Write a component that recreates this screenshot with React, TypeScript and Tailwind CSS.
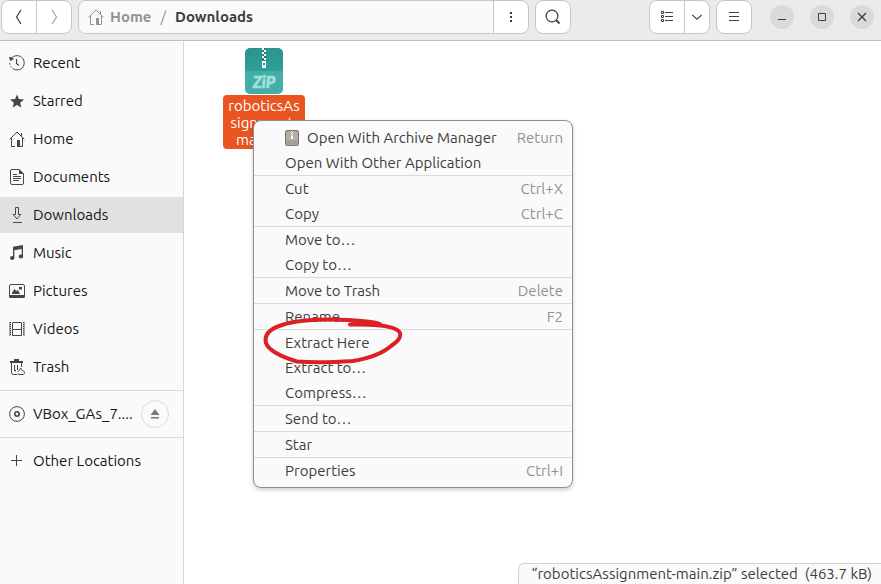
import React from "react";

const stroke = { fill: "none", stroke: "currentColor", strokeWidth: 1 } as const;

function Icon({ children, size = 16 }: { children: React.ReactNode; size?: number }) {
  return (
    <svg width={size} height={size} viewBox="0 0 16 16" className="shrink-0" aria-hidden="true">
      {children}
    </svg>
  );
}

const HomeIcon = () => (
  <Icon>
    <path {...stroke} d="M.6 8.4 8 1l7.4 7.4M2.5 7v8.5H6M13.5 7v8.5H10M12.5 2v3.5" />
    <path fill="currentColor" d="M8 9h3v7H8z" />
  </Icon>
);
const RecentIcon = () => (
  <Icon>
    <path {...stroke} d="M2.2 3.6A7.2 7.2 0 1 1 .8 8" strokeDasharray="34 1.5 1.5 1.5" />
    <path fill="currentColor" d="M0 2h2l3 2.2L1.2 6z" />
    <path {...stroke} strokeWidth={1.2} d="M7.5 4v4.5l2.5 2" />
  </Icon>
);
const StarIcon = () => (
  <Icon>
    <path fill="currentColor" d="m8 1.5 1.9 4.4 5.1.5-3.8 3.3 1.1 4.9L8 12l-4.3 2.6 1.1-4.9L1 6.4l5.1-.5z" />
  </Icon>
);
const DocumentsIcon = () => (
  <Icon>
    <path {...stroke} d="M3 .5h7L14.500 5v9a1.500 1.500 0 0 1-1.500 1.500H3A1.500 1.500 0 0 1 1.500 14V2A1.500 1.500 0 0 1 3 .5z" />
    <path fill="currentColor" d="M10 0v5h5z" />
    <path {...stroke} d="M4 5.500h4M4 7.500h8M4 9.500h8M4 11.500h6" />
  </Icon>
);
const DownloadsIcon = () => (
  <Icon>
    <path {...stroke} d="M6.500.5h3v7h2.300L8 12 4.200 7.500h2.300zM4 15.500h9" />
  </Icon>
);
const MusicIcon = () => (
  <Icon>
    <path fill="currentColor" d="M4 1.800 14 0v11h-1.300V4L5.300 5.300V13H4z" />
    <ellipse cx="3.200" cy="13" rx="2.200" ry="1.900" fill="currentColor" />
    <ellipse cx="11.900" cy="11.500" rx="2.200" ry="1.900" fill="currentColor" />
  </Icon>
);
const PicturesIcon = () => (
  <Icon>
    <rect {...stroke} x=".5" y="1.500" width="15" height="12" rx="1.500" />
    <path fill="currentColor" d="M0 12h16v1.500a1.500 1.500 0 0 1-1.500 1.500h-13A1.500 1.500 0 0 1 0 13.500zM3 11V9.500L5.500 6l2 2 1.500-1 2 4zM10 4h3v2.500h-3z" />
  </Icon>
);
const VideosIcon = () => (
  <Icon>
    <path {...stroke} d="M3.500 1.500h9v13h-9zM3.500 8.500h9" />
    <path {...stroke} strokeDasharray="1 1" d="M1.500 1v14M14.500 1v14" />
    <path {...stroke} strokeWidth={0.800} d="M.9 1v14M15.100 1v14" />
  </Icon>
);
const TrashIcon = () => (
  <Icon>
    <path fill="currentColor" d="M1 2h4V0h5v2h4v2H1z" />
    <path {...stroke} d="M2.500 4v9.500a2 2 0 0 0 2 2H8M12.500 4v4M5.500 6v6M8.500 6v5" />
    <path {...stroke} d="M9 13c0-1 1-1.500 2-2-.3-1 .2-1.500.8-2 .2 1.200 1.200 1.500 1.200 2.500 1.500.3 2.500 1 2.500 2.200 0 1-.6 1.800-1.500 1.800h-4c-.8 0-1.200-.8-1.200-1.500M6.500 11v1.500" />
  </Icon>
);
const DiscIcon = () => (
  <Icon>
    <circle {...stroke} cx="8" cy="8" r="7.400" />
    <circle {...stroke} strokeWidth={1.600} cx="8" cy="8" r="2.200" />
  </Icon>
);
const PlusIcon = () => (
  <Icon>
    <path {...stroke} d="M2 7.500h11M7.500 2v11" />
  </Icon>
);

const places = [
  { name: "Recent", icon: <RecentIcon /> },
  { name: "Starred", icon: <StarIcon /> },
  { name: "Home", icon: <HomeIcon /> },
  { name: "Documents", icon: <DocumentsIcon /> },
  { name: "Downloads", icon: <DownloadsIcon />, active: true },
  { name: "Music", icon: <MusicIcon /> },
  { name: "Pictures", icon: <PicturesIcon /> },
  { name: "Videos", icon: <VideosIcon /> },
  { name: "Trash", icon: <TrashIcon /> },
];

function Place({ name, icon, active }: { name: string; icon: React.ReactNode; active?: boolean }) {
  return (
    <button
      type="button"
      className={`flex h-9 w-full items-center gap-2 pl-[9px] text-left ${active ? "bg-[#e1e1e1]" : ""}`}
    >
      <span className="text-[#464646]">{icon}</span>
      <span className="whitespace-nowrap text-[#161616]">{name}</span>
    </button>
  );
}

function ArchiveIcon() {
  return (
    <svg width="14" height="16" viewBox="0 0 14 16" className="shrink-0" aria-hidden="true">
      <rect x=".5" y=".5" width="13" height="15" rx="1.500" fill="#b3b0a3" stroke="#77756c" />
      <path d="M1.500 10.500h11v4h-11z" fill="#a29f92" />
      <path d="M6 1h1v1H6zM7 2h1v1H7zM6 3h1v1H6zM7 4h1v1H7zM6 5h1v1H6zM6 6h2v3H6z" fill="#fff" />
    </svg>
  );
}

type Item = { label: string; keys?: string; icon?: boolean };

const menuGroups: Item[][] = [
  [
    { label: "Open With Archive Manager", keys: "Return", icon: true },
    { label: "Open With Other Application" },
  ],
  [
    { label: "Cut", keys: "Ctrl+X" },
    { label: "Copy", keys: "Ctrl+C" },
  ],
  [{ label: "Move to…" }, { label: "Copy to…" }],
  [{ label: "Move to Trash", keys: "Delete" }],
  [{ label: "Rename…", keys: "F2" }],
  [{ label: "Extract Here" }, { label: "Extract to…" }, { label: "Compress…" }],
  [{ label: "Send to…" }],
  [{ label: "Star" }],
  [{ label: "Properties", keys: "Ctrl+I" }],
];

function ContextMenu() {
  return (
    <div
      role="menu"
      className="absolute top-[79px] left-[69px] w-80 rounded-lg border border-[#8f8f8f] bg-[#fafafa] py-1 shadow-[0_2px_4px_rgba(0,0,0,0.2)]"
    >
      {menuGroups.map((group, i) => (
        <div key={i} role="group" className={i > 0 ? "border-t border-[#dadada]" : ""}>
          {group.map((item) => (
            <button
              key={item.label}
              type="button"
              role="menuitem"
              className="flex h-[25px] w-full items-center pr-[9px] pl-[31px] text-[#3d3d3d]"
            >
              {item.icon && (
                <span className="mr-2">
                  <ArchiveIcon />
                </span>
              )}
              <span>{item.label}</span>
              {item.keys && <span className="ml-auto text-[#929292]">{item.keys}</span>}
            </button>
          ))}
        </div>
      ))}
      <svg
        className="pointer-events-none absolute top-[195px] left-2"
        width="144"
        height="52"
        viewBox="0 0 144 52"
        fill="none"
        stroke="#dc2024"
        strokeWidth="4"
        strokeLinecap="round"
        strokeLinejoin="round"
        aria-hidden="true"
      >
        <path d="M118 8C111 5 102 5 86 4C62 3 36 4 20 9C7 13 2 19 4 27C7 35 20 41 35 45.500C55 47 75 46 91 45C109 42 121 37 129 30C136 25 139 22 138 17C136 12 126 10 113 9C104 8 95 8.500 88 8.500" />
      </svg>
    </div>
  );
}

function ZipFile() {
  return (
    <button type="button" className="mt-[7px] ml-[39px] flex w-[82px] flex-col items-center">
      <svg width="38" height="46" viewBox="0 0 38 46" aria-hidden="true">
        <defs>
          <linearGradient id="zip" x1="0" y1="0" x2="0" y2="1">
            <stop offset="0" stopColor="#2c928f" />
            <stop offset="1" stopColor="#35aaa1" />
          </linearGradient>
        </defs>
        <rect width="38" height="46" rx="5" fill="url(#zip)" />
        <path d="M0 23h38v17.500a5 5 0 0 1-5 5H5a5 5 0 0 1-5-5z" fill="#40b0a7" />
        <path d="M19 0v14" stroke="#24807e" strokeWidth="4" />
        <path d="M17 0h2v2h-2zM19 2h2v2h-2zM17 4h2v2h-2zM19 6h2v2h-2zM17 8h2v2h-2zM19 10h2v2h-2zM17 13h4v7h-4z" fill="#fff" />
        <path d="M18 15h2v2h-2z" fill="#2c928f" />
        <text
          x="19"
          y="40"
          textAnchor="middle"
          fill="#a5e0d8"
          stroke="#a5e0d8"
          strokeWidth=".6"
          fontFamily="Lato, sans-serif"
          fontSize="16"
          fontWeight="900"
          fontStyle="italic"
        >
          ZiP
        </text>
      </svg>
      <span className="mt-px w-full rounded bg-[#e95420] pt-0.5 pb-px text-center leading-[17px] text-white">
        roboticsAs
        <br />
        signment-
        <br />
        main.zip
      </span>
    </button>
  );
}

const boxed = "flex h-[34px] shrink-0 overflow-hidden rounded-lg border border-[#c6c6c6] bg-white text-[#3d3d3d]";
const cell = "flex h-full items-center justify-center";

function WindowButton({ label, children }: { label: string; children: React.ReactNode }) {
  return (
    <button
      type="button"
      aria-label={label}
      className="flex size-6 items-center justify-center rounded-full bg-[#dadada] text-[#3d3d3d]"
    >
      <Icon>{children}</Icon>
    </button>
  );
}

function HeaderBar() {
  return (
    <header className="flex h-[41px] shrink-0 items-start border-b border-[#bfbfbf] bg-[#ebebeb] pr-[7px] pl-px">
      <div className={`${boxed} w-[71px]`}>
        <button type="button" aria-label="Back" className={`${cell} w-[35px] border-r border-[#c6c6c6]`}>
          <Icon>
            <path {...stroke} strokeWidth={1.200} d="M10 1 5.500 8l4.500 7" />
          </Icon>
        </button>
        <button type="button" aria-label="Forward" className={`${cell} flex-1 text-[#a0a0a0]`}>
          <Icon>
            <path {...stroke} strokeWidth={1.200} d="M6 1l4.500 7L6 15" />
          </Icon>
        </button>
      </div>

      <div className={`${boxed} ml-1.5 min-w-0 flex-1`}>
        <nav aria-label="Path" className="flex flex-1 items-center bg-[#fafafa] pl-[9px] font-bold">
          <button type="button" className="flex items-center gap-[6px] text-[#929292]">
            <HomeIcon />
            Home
          </button>
          <span className="mx-[9px] font-normal text-[#929292]">/</span>
          <button type="button">Downloads</button>
        </nav>
        <button type="button" aria-label="Folder menu" className={`${cell} w-[35px] border-l border-[#c6c6c6]`}>
          <Icon>
            <path fill="currentColor" d="M7 3h2v2H7zM7 7h2v2H7zM7 11h2v2H7z" />
          </Icon>
        </button>
      </div>

      <button type="button" aria-label="Search" className={`${boxed} ml-1.5 w-9 items-center justify-center`}>
        <Icon>
          <circle {...stroke} strokeWidth={1.200} cx="7" cy="7" r="5.900" />
          <path {...stroke} strokeWidth={1.800} d="m11 11 3.500 3.500" />
        </Icon>
      </button>

      <div className={`${boxed} ml-[78px] w-[61px]`}>
        <button type="button" aria-label="List view" className={`${cell} w-[35px] border-r border-[#c6c6c6]`}>
          <Icon>
            <path {...stroke} d="M2.500 2.500h2v2h-2zM2.500 6.500h2v2h-2zM2.500 10.500h2v2h-2zM6 3.500h8M6 7.500h8M6 11.500h8" />
          </Icon>
        </button>
        <button type="button" aria-label="View options" className={`${cell} flex-1`}>
          <Icon size={14}>
            <path {...stroke} strokeWidth={1.300} d="m2.500 5.500 5.500 5 5.500-5" />
          </Icon>
        </button>
      </div>

      <button type="button" aria-label="Main menu" className={`${boxed} ml-1.5 w-9 items-center justify-center`}>
        <Icon>
          <path {...stroke} d="M3 3.500h10M3 7.500h10M3 11.500h10" />
        </Icon>
      </button>

      <div className="ml-[18px] flex h-[34px] items-center gap-4">
        <WindowButton label="Minimize">
          <path {...stroke} d="M4 10.500h8" />
        </WindowButton>
        <WindowButton label="Maximize">
          <path {...stroke} d="M4.500 4.500h7v7h-7z" />
        </WindowButton>
        <WindowButton label="Close">
          <path {...stroke} strokeWidth={1.300} d="m4 4 8 8M12 4l-8 8" />
        </WindowButton>
      </div>
    </header>
  );
}

export default function App() {
  return (
    <div className="flex h-screen flex-col overflow-hidden bg-white font-['Ubuntu','Noto_Sans',sans-serif] text-[15px] leading-5">
      <HeaderBar />
      <div className="flex min-h-0 flex-1">
        <aside className="w-[184px] shrink-0 border-r border-[#d6d6d6] bg-[#fafafa] pt-1">
          <div className="flex flex-col gap-0.5 pb-[5px]">
            {places.map((p) => (
              <Place key={p.name} {...p} />
            ))}
          </div>
          <div className="flex items-center border-y border-[#dadada] py-[5px] pr-[14px]">
            <div className="min-w-0 flex-1">
              <Place name="VBox_GAs_7...." icon={<DiscIcon />} />
            </div>
            <button
              type="button"
              aria-label="Eject"
              className="flex size-7 items-center justify-center rounded-full border border-[#dadada] text-[#777777]"
            >
              <Icon>
                <path fill="currentColor" d="m8 3 4.500 6h-9zM4 11h8v1.500H4z" />
              </Icon>
            </button>
          </div>
          <div className="pt-[5px]">
            <Place name="Other Locations" icon={<PlusIcon />} />
          </div>
        </aside>

        <main className="relative flex min-w-0 flex-1 flex-col items-start">
          <ZipFile />
          <ContextMenu />
          <div className="mt-auto self-end rounded-tl-md border-t border-l border-[#d0d0d0] bg-[#fafafa] pr-[9px] pl-3 text-[#3d3d3d]">
            “roboticsAssignment-main.zip” selected&nbsp; (463.7 kB)
          </div>
        </main>
      </div>
    </div>
  );
}
